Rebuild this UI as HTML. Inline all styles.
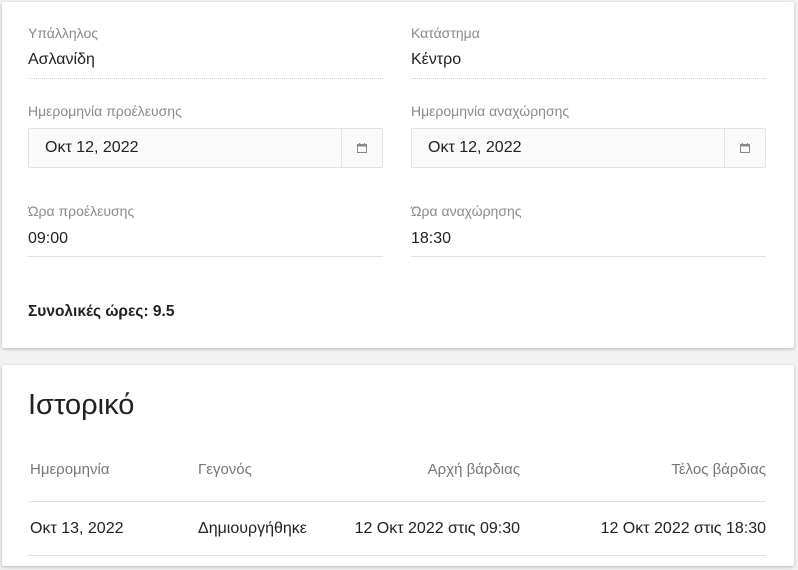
<!DOCTYPE html>
<html><head><meta charset="utf-8"><style>
*{box-sizing:border-box;margin:0;padding:0}
body{width:798px;height:570px;background:#f2f2f2;font-family:"Liberation Sans","DejaVu Sans",sans-serif;position:relative;overflow:hidden;color:#212121}
.card{position:absolute;left:2px;width:792px;background:#fff;box-shadow:0 1px 3px rgba(0,0,0,.25);border-radius:2px}
.a{position:absolute;white-space:nowrap}
.lbl{font-size:14px;color:#8a8a8a}
.val{font-size:16px;color:#212121}
.line{position:absolute;height:1px;background:#e0e0e0}
.dot{position:absolute;height:1px;border-top:1px dotted #d0d0d0}
.box{position:absolute;height:40px;border:1px solid #e2e2e2;background:#fafafa;border-radius:2px}
.box .ic{position:absolute;right:0;top:0;width:41px;height:38px;border-left:1px solid #e2e2e2}
.th{font-size:15px;color:#777}
.td{font-size:16px;color:#212121}
</style></head><body>
<div class="card" style="top:2px;height:346px"></div>
<div class="card" style="top:365px;height:201px"></div>

<div class="a lbl" style="left:28px;top:25px">Υπάλληλος</div>
<div class="a val" style="left:28px;top:51px">Ασλανίδη</div>
<div class="dot" style="left:28px;top:78px;width:355px"></div>
<div class="a lbl" style="left:411px;top:25px">Κατάστημα</div>
<div class="a val" style="left:411px;top:51px">Κέντρο</div>
<div class="dot" style="left:411px;top:78px;width:355px"></div>

<div class="a lbl" style="left:28px;top:103px">Ημερομηνία προέλευσης</div>
<div class="box" style="left:28px;top:128px;width:355px"><div class="a val" style="left:16px;top:10px">Οκτ 12, 2022</div><div class="ic"><svg style="position:absolute;left:15px;top:14px" width="10" height="10" viewBox="0 0 10 10"><rect x="0.5" y="1.5" width="9" height="8" fill="none" stroke="#888"/><rect x="0.5" y="1.5" width="9" height="2" fill="#888"/><line x1="2.5" y1="0" x2="2.5" y2="2" stroke="#888"/><line x1="7.5" y1="0" x2="7.5" y2="2" stroke="#888"/></svg></div></div>
<div class="a lbl" style="left:411px;top:103px">Ημερομηνία αναχώρησης</div>
<div class="box" style="left:411px;top:128px;width:355px"><div class="a val" style="left:16px;top:10px">Οκτ 12, 2022</div><div class="ic"><svg style="position:absolute;left:15px;top:14px" width="10" height="10" viewBox="0 0 10 10"><rect x="0.5" y="1.5" width="9" height="8" fill="none" stroke="#888"/><rect x="0.5" y="1.5" width="9" height="2" fill="#888"/><line x1="2.5" y1="0" x2="2.5" y2="2" stroke="#888"/><line x1="7.5" y1="0" x2="7.5" y2="2" stroke="#888"/></svg></div></div>

<div class="a lbl" style="left:28px;top:203px">Ώρα προέλευσης</div>
<div class="a val" style="left:28px;top:230px">09:00</div>
<div class="line" style="left:28px;top:256px;width:355px"></div>
<div class="a lbl" style="left:411px;top:203px">Ώρα αναχώρησης</div>
<div class="a val" style="left:411px;top:230px">18:30</div>
<div class="line" style="left:411px;top:256px;width:355px"></div>

<div class="a" style="left:28px;top:303px;font-size:15.5px;font-weight:bold">Συνολικές ώρες: 9.5</div>

<div class="a" style="left:28px;top:389px;font-size:29px;color:#212121">Ιστορικό</div>
<div class="a th" style="left:30px;top:461px">Ημερομηνία</div>
<div class="a th" style="left:198px;top:461px">Γεγονός</div>
<div class="a th" style="right:278px;top:461px">Αρχή βάρδιας</div>
<div class="a th" style="right:32px;top:461px">Τέλος βάρδιας</div>
<div class="line" style="left:28px;top:501px;width:738px"></div>
<div class="a td" style="left:30px;top:520px">Οκτ 13, 2022</div>
<div class="a td" style="left:198px;top:520px">Δημιουργήθηκε</div>
<div class="a td" style="right:278px;top:520px">12 Οκτ 2022 στις 09:30</div>
<div class="a td" style="right:32px;top:520px">12 Οκτ 2022 στις 18:30</div>
<div class="line" style="left:28px;top:555px;width:738px"></div>
</body></html>
